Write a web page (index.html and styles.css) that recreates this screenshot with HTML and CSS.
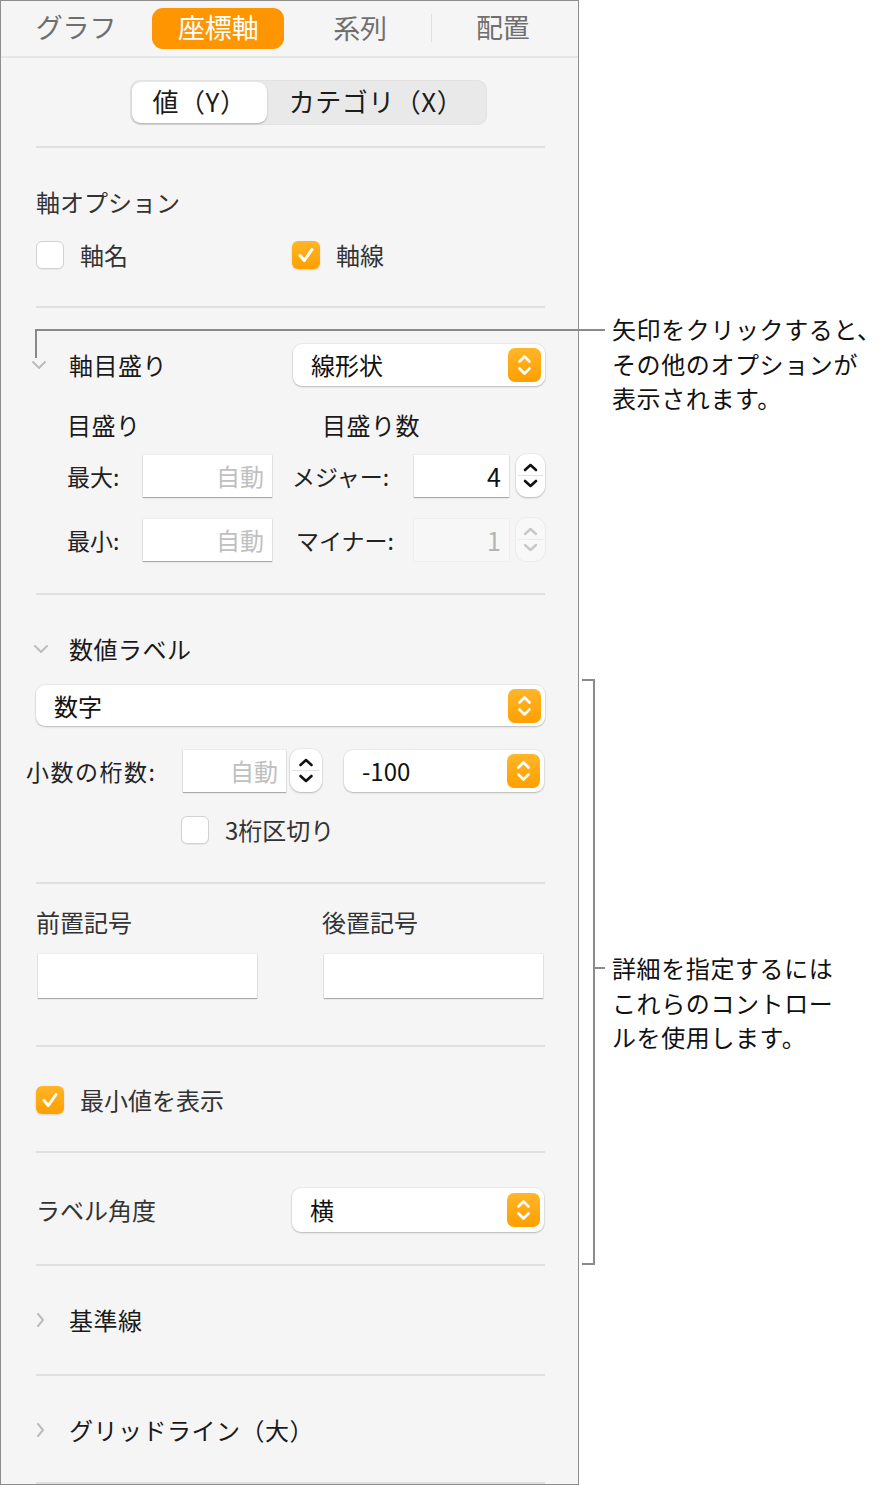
FILE: index.html
```html
<!DOCTYPE html>
<html lang="ja">
<head>
<meta charset="utf-8">
<link rel="stylesheet" href="styles.css">
</head>
<body>
<div class="page">
  <div class="panel">
    <div class="tabs">
      <div class="tab">グラフ</div>
      <div class="tab"><span class="pill">座標軸</span></div>
      <div class="tab tab-sep">系列</div>
      <div class="tab">配置</div>
    </div>
    <div class="body">
      <div class="seg">
        <div class="seg-item seg-on">値（Y）</div>
        <div class="seg-item">カテゴリ（X）</div>
      </div>
      <div class="rule r1"></div>

      <div class="label m-axisopt">軸オプション</div>
      <div class="row checks m-checks">
        <div class="check-item w256"><span class="cb"></span><span class="cb-label">軸名</span></div>
        <div class="check-item"><span class="cb cb-on"><svg width="28" height="28" viewBox="0 0 28 28"><path d="M8 14.5 L12.3 19.5 L20 8.5" fill="none" stroke="#fff" stroke-width="3" stroke-linecap="round" stroke-linejoin="round"/></svg></span><span class="cb-label">軸線</span></div>
      </div>
      <div class="rule m-r2"></div>

      <div class="row m-scale">
        <div class="disclose"><svg width="16" height="10" viewBox="0 0 16 10"><path d="M2 2 L8 8 L14 2" fill="none" stroke="#bdbdbd" stroke-width="2" stroke-linecap="round" stroke-linejoin="round"/></svg></div>
        <div class="head w224">軸目盛り</div>
        <div class="select w252"><span class="select-text">線形状</span><span class="select-btn"><svg width="33" height="34" viewBox="0 0 33 34"><path d="M11.5 13.5 L16.5 8.5 L21.5 13.5 M11.5 20.5 L16.5 25.5 L21.5 20.5" fill="none" stroke="#fff" stroke-width="2.6" stroke-linecap="round" stroke-linejoin="round"/></svg></span></div>
      </div>

      <div class="row sub m-ticks">
        <div class="head w255">目盛り</div>
        <div class="head">目盛り数</div>
      </div>
      <div class="row sub m-max">
        <div class="fl w76">最大:</div>
        <div class="field w129"><span class="ph">自動</span></div>
        <div class="fl w122 ml20">メジャー:</div>
        <div class="field w95"><span class="val">4</span></div>
        <div class="stepper ml7"><svg width="29" height="43" viewBox="0 0 29 43"><path d="M9 16 L14.5 11 L20 16 M9 27 L14.5 32 L20 27" fill="none" stroke="#111" stroke-width="2.6" stroke-linecap="round" stroke-linejoin="round"/><line x1="2" y1="21.5" x2="27" y2="21.5" stroke="#e2e2e2" stroke-width="1"/></svg></div>
      </div>
      <div class="row sub m-min">
        <div class="fl w76">最小:</div>
        <div class="field w129"><span class="ph">自動</span></div>
        <div class="fl w122 ml20 pl4">マイナー:</div>
        <div class="field w95 field-off"><span class="val val-off">1</span></div>
        <div class="stepper ml7 stepper-off"><svg width="29" height="43" viewBox="0 0 29 43"><path d="M9 16 L14.5 11 L20 16 M9 27 L14.5 32 L20 27" fill="none" stroke="#c8c8c8" stroke-width="2.4" stroke-linecap="round" stroke-linejoin="round"/><line x1="2" y1="21.5" x2="27" y2="21.5" stroke="#ececec" stroke-width="1"/></svg></div>
      </div>
      <div class="rule m-r3"></div>

      <div class="row m-numhead">
        <div class="disclose"><svg width="16" height="10" viewBox="0 0 16 10"><path d="M2 2 L8 8 L14 2" fill="none" stroke="#bdbdbd" stroke-width="2" stroke-linecap="round" stroke-linejoin="round"/></svg></div>
        <div class="head">数値ラベル</div>
      </div>
      <div class="select wfull m-numsel"><span class="select-text">数字</span><span class="select-btn"><svg width="33" height="34" viewBox="0 0 33 34"><path d="M11.5 13.5 L16.5 8.5 L21.5 13.5 M11.5 20.5 L16.5 25.5 L21.5 20.5" fill="none" stroke="#fff" stroke-width="2.6" stroke-linecap="round" stroke-linejoin="round"/></svg></span></div>
      <div class="row m-dec">
        <div class="fl w157 neg10 wide">小数の桁数:</div>
        <div class="field w103"><span class="ph">自動</span></div>
        <div class="stepper ml4 w32"><svg width="32" height="43" viewBox="0 0 32 43"><path d="M10.5 16 L16 11 L21.5 16 M10.5 27 L16 32 L21.5 27" fill="none" stroke="#111" stroke-width="2.6" stroke-linecap="round" stroke-linejoin="round"/><line x1="2" y1="21.5" x2="30" y2="21.5" stroke="#e2e2e2" stroke-width="1"/></svg></div>
        <div class="select w200 ml22"><span class="select-text">-100</span><span class="select-btn"><svg width="33" height="34" viewBox="0 0 33 34"><path d="M11.5 13.5 L16.5 8.5 L21.5 13.5 M11.5 20.5 L16.5 25.5 L21.5 20.5" fill="none" stroke="#fff" stroke-width="2.6" stroke-linecap="round" stroke-linejoin="round"/></svg></span></div>
      </div>
      <div class="row m-sep3">
        <div class="check-item pl145"><span class="cb"></span><span class="cb-label">3桁区切り</span></div>
      </div>
      <div class="rule m-r4"></div>

      <div class="row m-affix">
        <div class="label w286">前置記号</div>
        <div class="label">後置記号</div>
      </div>
      <div class="row m-affixin">
        <div class="field w219 ml2 tall"></div>
        <div class="field w219 ml67 tall"></div>
      </div>
      <div class="rule m-r5"></div>

      <div class="row m-showmin">
        <div class="check-item"><span class="cb cb-on"><svg width="28" height="28" viewBox="0 0 28 28"><path d="M8 14.5 L12.3 19.5 L20 8.5" fill="none" stroke="#fff" stroke-width="3" stroke-linecap="round" stroke-linejoin="round"/></svg></span><span class="cb-label">最小値を表示</span></div>
      </div>
      <div class="rule m-r6"></div>

      <div class="row m-angle">
        <div class="label w256">ラベル角度</div>
        <div class="select w252 tall"><span class="select-text">横</span><span class="select-btn"><svg width="33" height="34" viewBox="0 0 33 34"><path d="M11.5 13.5 L16.5 8.5 L21.5 13.5 M11.5 20.5 L16.5 25.5 L21.5 20.5" fill="none" stroke="#fff" stroke-width="2.6" stroke-linecap="round" stroke-linejoin="round"/></svg></span></div>
      </div>
      <div class="rule m-r7"></div>

      <div class="row m-base">
        <div class="disclose"><svg width="10" height="16" viewBox="0 0 10 16"><path d="M3 2 L8 8 L3 14" fill="none" stroke="#bdbdbd" stroke-width="2" stroke-linecap="round" stroke-linejoin="round"/></svg></div>
        <div class="head">基準線</div>
      </div>
      <div class="rule m-r8"></div>

      <div class="row m-grid">
        <div class="disclose"><svg width="10" height="16" viewBox="0 0 10 16"><path d="M3 2 L8 8 L3 14" fill="none" stroke="#bdbdbd" stroke-width="2" stroke-linecap="round" stroke-linejoin="round"/></svg></div>
        <div class="head">グリッドライン（大）</div>
      </div>
      <div class="rule m-r9"></div>
    </div>
  </div>

  <div class="callout-line line-h"></div>
  <div class="callout-line line-v"></div>
  <div class="callout callout-1">矢印をクリックすると、<br>その他のオプションが<br>表示されます。</div>

  <div class="bracket"></div>
  <div class="callout-line line-tick"></div>
  <div class="callout callout-2">詳細を指定するには<br>これらのコントロー<br>ルを使用します。</div>
</div>
</body>
</html>
```

FILE: styles.css
```css
* { box-sizing: border-box; }
html, body { margin: 0; padding: 0; background: #fff; }
body {
  font-family: "Noto Sans CJK JP", "Noto Sans", sans-serif;
  color: #222;
  width: 881px;
  height: 1485px;
  overflow: hidden;
}
.page { position: relative; width: 881px; height: 1485px; display: flex; }

.panel {
  width: 579px;
  height: 1485px;
  border: 1px solid #8e8e8e;
  background: #f5f5f5;
  overflow: hidden;
  flex: none;
}

/* tabs */
.tabs {
  height: 57px;
  padding: 0 4px;
  display: grid;
  grid-template-columns: repeat(4, 1fr);
  border-bottom: 2px solid #e6e6e6;
}
.tab {
  display: flex;
  align-items: center;
  justify-content: center;
  font-size: 27px;
  line-height: 1;
  color: #6f6f6f;
  height: 54px;
  padding-bottom: 4px;
}
.tab-sep { border-right: 1px solid #e0e0e0; height: 28px; margin-top: 13px; padding-bottom: 2px; }
.pill {
  display: flex;
  align-items: center;
  justify-content: center;
  width: 132px;
  height: 41px;
  margin-top: 4px;
  padding-bottom: 3px;
  background: #ff9500;
  color: #fff;
  border-radius: 11px;
}

.body { padding: 0 33px 0 35px; }

/* segmented */
.seg {
  margin-top: 22px;
  margin-left: 94px;
  width: 357px;
  height: 45px;
  background: #e9e9e9;
  border-radius: 10px;
  padding: 2px;
  display: flex;
  box-shadow: inset 0 0 0 1px #e2e2e2;
}
.seg-item {
  display: flex;
  align-items: center;
  justify-content: center;
  font-size: 26px;
  color: #1c1c1c;
  height: 41px;
  line-height: 1;
  flex: 1;
  padding-bottom: 4px;
  letter-spacing: 0.5px;
}
.seg-item.seg-on {
  flex: none;
  width: 135px;
  background: #fff;
  border-radius: 9px;
  box-shadow: 0 1px 2px rgba(0,0,0,0.25);
}

.rule { height: 2px; background: #e0e0e0; width: 509px; }
.r1 { margin-top: 21px; }

.row { display: flex; align-items: center; }
.label { font-size: 24px; line-height: 32px; color: #333; }
.head { font-size: 24px; line-height: 32px; color: #1a1a1a; letter-spacing: 0.5px; }
.fl { font-size: 23px; line-height: 32px; color: #222; }
.fl.wide { letter-spacing: 1.5px; }

.w256 { width: 256px; flex: none; }
.w255 { width: 255px; flex: none; }
.w224 { width: 224px; flex: none; }
.w286 { width: 286px; flex: none; }
.w252 { width: 252px; flex: none; }
.w76 { width: 76px; flex: none; }
.w122 { width: 122px; flex: none; }
.w129 { width: 129px; flex: none; }
.w95 { width: 95px; flex: none; }
.w157 { width: 157px; flex: none; }
.w103 { width: 103px; flex: none; }
.w200 { width: 200px; flex: none; }
.w219 { width: 219px; flex: none; }
.w32 { width: 32px; }
.wfull { width: 509px; }
.ml2 { margin-left: 2px; }
.ml4 { margin-left: 4px; }
.ml7 { margin-left: 7px; }
.ml20 { margin-left: 20px; }
.ml22 { margin-left: 22px; }
.ml67 { margin-left: 67px; }
.pl4 { padding-left: 4px; }
.pl145 { padding-left: 145px; }
.neg10 { margin-left: -10px; }

/* checkbox */
.check-item { display: flex; align-items: center; height: 32px; }
.cb {
  width: 28px; height: 28px;
  border-radius: 6px;
  background: #fff;
  border: 1px solid #d2d2d2;
  box-shadow: 0 1px 1px rgba(0,0,0,0.06);
  flex: none;
  display: block;
}
.cb svg { display: block; }
.cb.cb-on {
  border: none;
  background: linear-gradient(#ffb526, #ffa000);
  box-shadow: 0 1px 2px rgba(0,0,0,0.15);
}
.cb-label { margin-left: 16px; font-size: 24px; line-height: 32px; color: #333; }

.m-axisopt { margin-top: 38px; }
.m-checks { margin-top: 21px; }
.m-r2 { margin-top: 35px; }

/* disclosure */
.disclose { width: 32px; flex: none; display: flex; align-items: center; justify-content: flex-start; padding-left: 0; }
.m-scale { margin-top: 36px; height: 42px; }
.m-scale .disclose { margin-left: -5px; width: 38px; }
.m-numhead .disclose, .m-base .disclose, .m-grid .disclose { margin-left: -3px; width: 36px; }
.m-base .disclose, .m-grid .disclose { padding-left: 2px; }

/* select */
.select {
  height: 42px;
  background: #fff;
  border-radius: 9px;
  box-shadow: 0 1px 2px rgba(0,0,0,0.22), 0 0 0 1px rgba(0,0,0,0.04);
  display: flex;
  align-items: center;
  justify-content: space-between;
  padding: 0 4px 0 18px;
  flex: none;
}
.select.tall { height: 44px; }
.select-text { font-size: 24px; line-height: 32px; color: #111; }
.select-btn {
  width: 33px; height: 34px;
  border-radius: 7px;
  background: linear-gradient(#ffb629, #ff9f00);
  display: block;
}
.select-btn svg { display: block; }

.sub { padding-left: 31px; }
.m-ticks { margin-top: 23px; }
.m-max { margin-top: 13px; height: 43px; }
.m-min { margin-top: 21px; height: 43px; }

/* fields */
.field {
  height: 42px;
  background: #fff;
  box-shadow: 0 1px 1px rgba(0,0,0,0.28), 0 0 0 1px #ececec;
  display: flex;
  align-items: center;
  justify-content: flex-end;
  padding-right: 8px;
  flex: none;
}
.field.tall { height: 44px; }
.field.field-off { background: #f7f7f7; box-shadow: 0 0 0 1px #eeeeee; }
.ph { font-size: 24px; line-height: 32px; color: #c0c0c0; }
.val { font-size: 25px; line-height: 32px; color: #111; }
.val.val-off { color: #b4b4b4; }

.stepper {
  width: 29px; height: 43px;
  background: #fff;
  border-radius: 11px;
  box-shadow: 0 1px 2px rgba(0,0,0,0.22), 0 0 0 1px rgba(0,0,0,0.04);
  flex: none;
}
.stepper.w32 { width: 32px; }
.stepper svg { display: block; }
.stepper.stepper-off { background: #f8f8f8; box-shadow: 0 0 0 1px #ececec; }

.m-r3 { margin-top: 32px; }
.m-numhead { margin-top: 38px; }
.m-numsel { margin-top: 20px; height: 41px; }
.m-dec { margin-top: 23px; height: 43px; }
.m-sep3 { margin-top: 22px; }
.m-r4 { margin-top: 36px; }
.m-affix { margin-top: 22px; }
.m-affixin { margin-top: 16px; }
.m-r5 { margin-top: 47px; }
.m-showmin { margin-top: 37px; }
.m-r6 { margin-top: 35px; }
.m-angle { margin-top: 35px; }
.m-r7 { margin-top: 32px; }
.m-base { margin-top: 38px; }
.m-r8 { margin-top: 38px; }
.m-grid { margin-top: 38px; }
.m-r9 { margin-top: 36px; }

/* callouts */
.callout-line { position: absolute; background: #8a8a8a; }
.line-h { left: 35px; top: 329px; width: 570px; height: 2px; }
.line-v { left: 35px; top: 329px; width: 2px; height: 29px; }
.line-tick { left: 593px; top: 967px; width: 12px; height: 2px; }
.bracket {
  position: absolute;
  left: 582px; top: 679px;
  width: 13px; height: 586px;
  border: 2px solid #8a8a8a;
  border-left: none;
}
.callout {
  position: absolute;
  left: 612px;
  font-size: 24px;
  line-height: 34.5px;
  color: #111;
  white-space: nowrap;
  letter-spacing: 0.6px;
}
.callout-1 { top: 312px; }
.callout-2 { top: 951px; }
```
